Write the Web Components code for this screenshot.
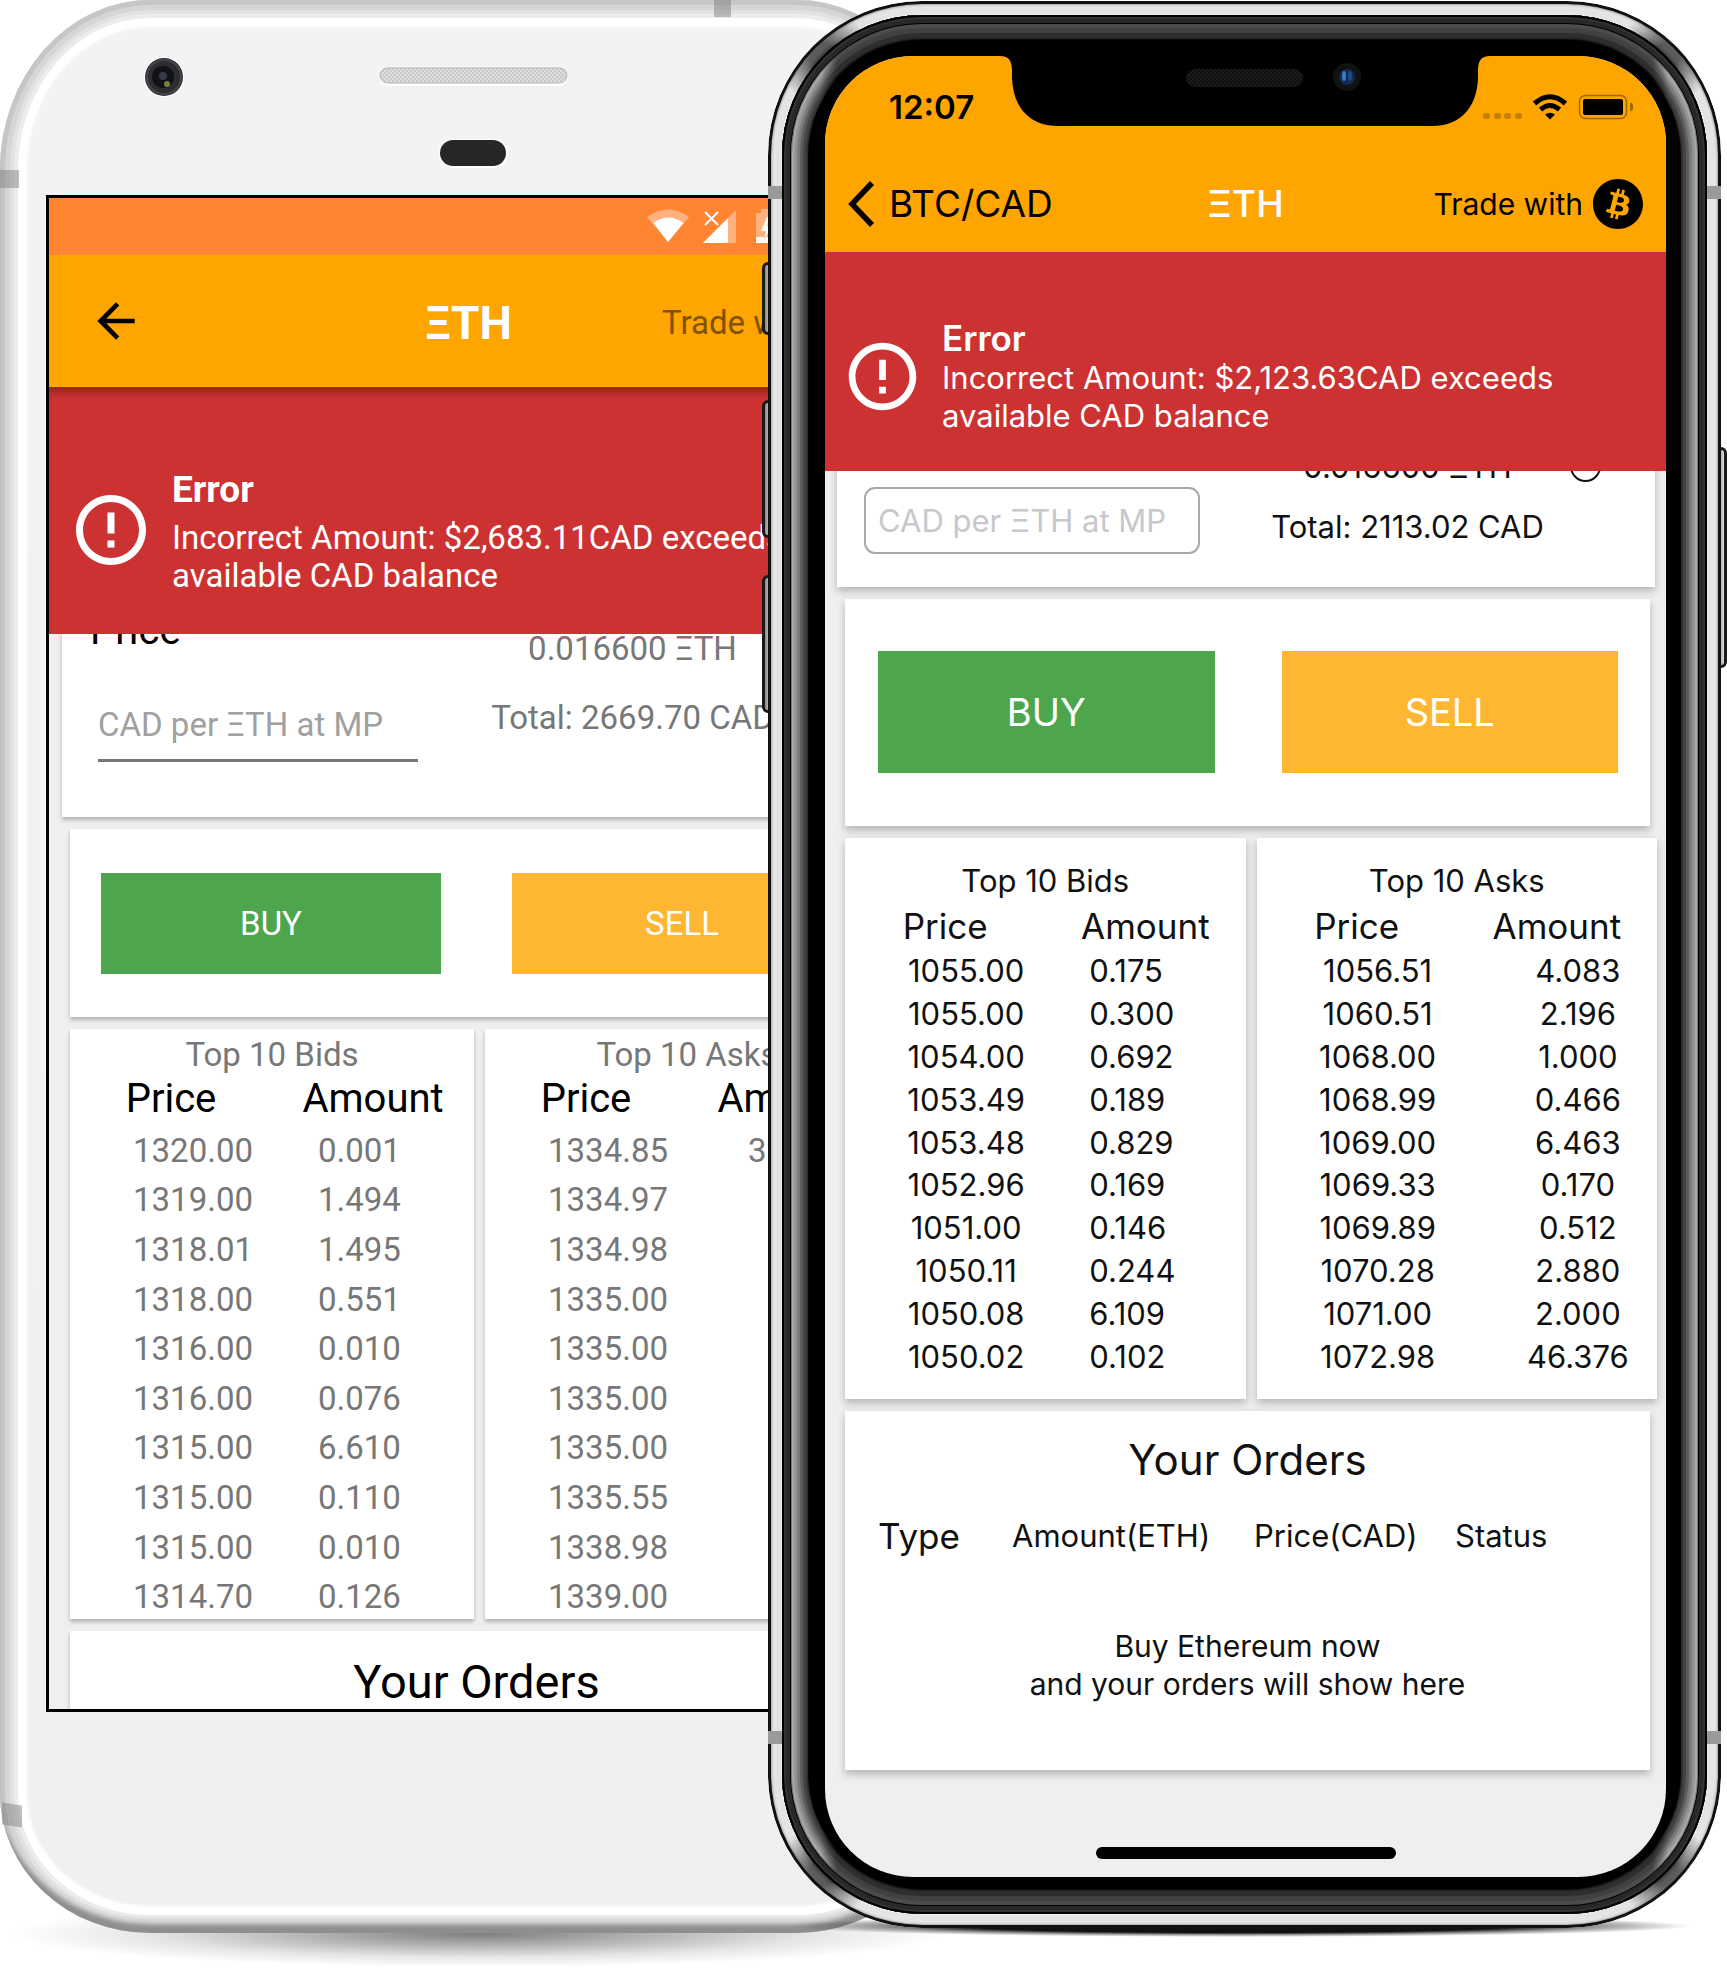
<!DOCTYPE html>
<html lang="en">
<head>
<meta charset="utf-8">
<title>ETH trading on Android and iOS</title>
<style>
  body { margin: 0; background: #fff; }
</style>
</head>
<body>
<device-stage>
  <android-device slot="back">
    <android-status></android-status>
    <android-toolbar></android-toolbar>
    <error-banner heading="Error">Incorrect Amount: $2,683.11CAD exceeds<br>available CAD balance</error-banner>
    <price-form variant="android" amount="0.016600 ΞTH" total="Total: 2669.70 CAD"></price-form>
    <trade-actions></trade-actions>
    <book-pair>
      <order-book heading="Top 10 Bids" rows="1320.00 0.001,1319.00 1.494,1318.01 1.495,1318.00 0.551,1316.00 0.010,1316.00 0.076,1315.00 6.610,1315.00 0.110,1315.00 0.010,1314.70 0.126"></order-book>
      <order-book side="asks" heading="Top 10 Asks" rows="1334.85 3,1334.97,1334.98,1335.00,1335.00,1335.00,1335.00,1335.55,1338.98,1339.00"></order-book>
    </book-pair>
    <orders-card></orders-card>
  </android-device>
  <iphone-device slot="front">
    <ios-header></ios-header>
    <error-banner heading="Error">Incorrect Amount: $2,123.63CAD exceeds<br>available CAD balance</error-banner>
    <price-form variant="ios" amount="0.016600 ΞTH" total="Total: 2113.02 CAD"></price-form>
    <trade-actions></trade-actions>
    <book-pair>
      <order-book heading="Top 10 Bids" rows="1055.00 0.175,1055.00 0.300,1054.00 0.692,1053.49 0.189,1053.48 0.829,1052.96 0.169,1051.00 0.146,1050.11 0.244,1050.08 6.109,1050.02 0.102"></order-book>
      <order-book side="asks" heading="Top 10 Asks" rows="1056.51 4.083,1060.51 2.196,1068.00 1.000,1068.99 0.466,1069.00 6.463,1069.33 0.170,1069.89 0.512,1070.28 2.880,1071.00 2.000,1072.98 46.376"></order-book>
    </book-pair>
    <orders-card detailed></orders-card>
  </iphone-device>
</device-stage>

<script>
const define = (name, template) => customElements.define(name, class extends HTMLElement {
  connectedCallback() {
    if (this.shadowRoot) return;
    this.attachShadow({ mode: 'open' }).innerHTML =
      '<style>*,*::before,*::after,:host{box-sizing:border-box}:host{display:block}</style>' + template(this);
  }
});

/* Two phones share one grid; the front one overlaps the middle track. */
define('device-stage', () => `
  <style>
    :host { display: grid; grid-template-columns: 768fr 179fr 774fr 6fr; align-items: start; padding-bottom: 41px; overflow: hidden; }
    slot { display: block; grid-row: 1; min-width: 0; }
    [name=back] { grid-column: 1 / 3; }
    [name=front] { grid-column: 2 / 4; z-index: 1; padding-top: 1px; }
  </style>
  <slot name="back"></slot><slot name="front"></slot>`);

define('android-device', () => `
  <style>
    :host {
      position: relative;
      font-family: Roboto, "Liberation Sans", sans-serif;
      --text: #777; --strong: #000; --size: 33px; --head-size: 40px;
      --banner-pad: 77px 0 39px 20px; --banner-gap: 19px; --icon: 84px;
      --error-size: 37px; --error-line: 51px; --error-gap: 4px; --error-weight: 700; --message-size: 33px;
      --banner-shade: inset 0 10px 10px -6px rgba(0,0,0,.35);
      --card-margin: 12px 15px 0 21px; --pair-margin: 12px 9px 0 21px; --card-shade: 0 3px 4px rgba(0,0,0,.25);
      --actions-pad: 44px 31px 43px; --actions-gap: 71px; --button-height: 101px; --button-size: 33px;
      --book-pad: 6px 0 0; --title-line: 40px; --th-height: 48px; --td-height: 49px; --table-height: 544px; --td-top: 6px;
      --price-pad: 0 0 0 44px; --amount-pad: 0 0 0 46px; --asks-amount-pad: 0 0 0 61px; --asks-align: left;
      --orders-size: 47px; --orders-line: 54px; --orders-pad: 24px 0 0;
    }
    .body {
      position: relative; padding: 0 46px 221px; border-radius: 150px 150px 150px 150px / 170px 170px 140px 140px;
      background: linear-gradient(#f3f3f3, #f0f0f0);
      box-shadow: inset 0 -12px 5px -3px #8e8e8e, inset 0 -18px 3px -3px #dedede,
        inset 0 0 0 5px #c6c6c6, inset 0 0 0 10px #d6d6d6, inset 0 0 0 14px #e2e2e2,
        inset 0 0 0 18px #ececec, inset 0 0 3px 27px #fff;
    }
    .ground { position: absolute; left: 10px; right: 0; bottom: -34px; height: 66px; border-radius: 50%;
      background: radial-gradient(closest-side, rgba(0,0,0,.5), rgba(0,0,0,.1) 70%, transparent); }
    .top { display: block; width: 100%; height: 195px; }
    .screen { border: 3px solid #000; background: #efefef; overflow: hidden; }
    .band { position: absolute; background: rgba(120,120,120,.45); }
    .left-top { left: 0; top: 170px; width: 19px; height: 18px; }
    .left-bottom { left: 2px; top: 1804px; width: 20px; height: 22px; transform: skewY(8deg); }
    .top-right { right: 216px; top: 0; width: 17px; height: 17px; }
  </style>
  <div class="ground"></div>
  <div class="body">
    <svg class="top" viewBox="46 0 855 195" aria-hidden="true">
      <defs><pattern id="mesh" width="4" height="4" patternUnits="userSpaceOnUse"><rect width="4" height="4" fill="#dedede"/><circle cx="1" cy="1" r="1" fill="#c2c2c2"/><circle cx="3" cy="3" r="1" fill="#c2c2c2"/></pattern></defs>
      <circle cx="164" cy="77" r="20" fill="#fff"/><circle cx="164" cy="77" r="19" fill="#2c2d31"/><circle cx="164" cy="77" r="17" fill="none" stroke="#44464b" stroke-width="2"/>
      <circle cx="163" cy="77" r="11" fill="#111215"/><circle cx="163" cy="76" r="4" fill="#363a48"/><circle cx="167" cy="84" r="3" fill="#75823a"/>
      <rect x="379" y="68" width="189" height="18" rx="9" fill="#fff"/><rect x="380" y="68" width="187" height="15" rx="7.500" fill="url(#mesh)" stroke="#b4b4b4"/>
      <rect x="439" y="139" width="69" height="29" rx="14" fill="#fff"/><rect x="440" y="140" width="66" height="26" rx="13" fill="#272727"/>
    </svg>
    <div class="screen"><slot></slot></div>
  </div>
  <span class="band left-top"></span><span class="band left-bottom"></span><span class="band top-right"></span>`);

define('android-status', () => `
  <style>
    :host { display: flex; justify-content: flex-end; background: #ff8533; height: 57px; padding: 9px 111px 0 0; }
    svg { display: block; width: 140px; height: 40px; }
  </style>
  <svg viewBox="647 207 140 40" role="img" aria-label="Wi-Fi, no signal, charging">
    <path d="M647 217Q668 202 689 217L668 242z" fill="#ffb280"/><path d="M653.500 223Q668 212 683.500 223L668 242z" fill="#fff"/>
    <path d="M703 243 736 210V243z" fill="#ffb280"/><path d="M703 243 728 218V243z" fill="#fff"/><path d="M705 212l13 13m0-13l-13 13" stroke="#fff" stroke-width="2"/>
    <path d="M756 213h5v-4h12v4h5v30h-22z" fill="#ffb280"/><path d="M756 237h22v6h-22zM767 217l-6 14h5l-2 9 8-14h-5l2-9z" fill="#fff"/>
  </svg>`);

define('android-toolbar', () => `
  <style>
    header { display: grid; grid-template-columns: 1fr auto 1fr; gap: 150px; align-items: center; height: 132px; padding: 0 49px 0 39px; background: #ffa500; }
    button { justify-self: start; border: 0; padding: 0; background: none; width: 56px; height: 56px; }
    svg { display: block; width: 56px; height: 56px; }
    h1, p { margin: 0; padding-top: 4px; white-space: nowrap; }
    h1 { font-size: 46px; line-height: 54px; color: #fff; }
    p { font-size: 33px; line-height: 40px; color: #7f5200; }
  </style>
  <header>
    <button aria-label="Back"><svg viewBox="0 0 24 24"><path d="M20 11H7.830l5.590-5.590L12 4l-8 8 8 8 1.410-1.410L7.830 13H20v-2z"/></svg></button>
    <h1>ΞTH</h1><p>Trade with</p>
  </header>`);

define('iphone-device', () => `
  <style>
    :host {
      position: relative;
      font-family: Inter, "Liberation Sans", sans-serif;
      --text: #111; --strong: #111; --size: 31px; --head-size: 35px;
      --banner-pad: 66px 0 36px 17px; --banner-gap: 19px; --icon: 81px;
      --error-size: 35px; --error-line: 40px; --error-gap: 1px; --error-weight: 600; --message-size: 31px; --banner-shade: none;
      --card-margin: 12px 16px 0 20px; --pair-margin: 12px 9px 0 20px; --card-shade: 0 4px 8px rgba(0,0,0,.25);
      --actions-pad: 52px 32px 53px 33px; --actions-gap: 67px; --button-height: 122px; --button-size: 38px;
      --book-pad: 21px 0 22px; --title-line: 43px; --th-height: 47px; --td-height: 42px; --table-height: 475px; --td-top: 2px;
      --price-pad: 0 0 0 42px; --amount-pad: 0 0 0 44px; --asks-amount-pad: 0 0 0 42px; --asks-align: center;
      --orders-size: 42px; --orders-line: 52px; --orders-pad: 23px 0 67px;
    }
    .key { position: absolute; left: -6px; width: 12px; border: 3px solid #1a1a1a; border-radius: 6px; background: linear-gradient(90deg, #888, #ddd); }
    .mute { top: 261px; height: 73px; } .up { top: 399px; height: 138px; } .down { top: 574px; height: 138px; }
    .power { left: auto; right: -6px; top: 446px; height: 221px; }
    .ground { position: absolute; left: 2%; right: 3%; bottom: -9px; height: 22px; border-radius: 50%;
      background: radial-gradient(closest-side, #111 60%, rgba(60,60,60,.5) 80%, transparent); }
    .shell {
      position: relative; padding: 55px 55px 51px 57px; border-radius: 154px;
      background:
        radial-gradient(circle at 54px 54px, #333 12px, transparent 48px),
        radial-gradient(circle at calc(100% - 54px) 54px, #333 12px, transparent 48px),
        radial-gradient(circle at 54px calc(100% - 54px), #333 12px, transparent 48px),
        radial-gradient(circle at calc(100% - 54px) calc(100% - 54px), #333 12px, transparent 48px), #fff;
      box-shadow: inset 0 0 0 3px #111, inset 0 0 2px 4px rgba(110,110,110,.5), inset 0 0 3px 11px rgba(255,255,255,.1), inset 0 0 3px 14px rgba(140,140,140,.25);
    }
    .rim, .glow { position: absolute; inset: 14px; border-radius: 140px; }
    .rim { background: #000; box-shadow: inset 0 0 0 2px #000, inset 0 0 0 4px #333, inset 0 0 0 8px #282828, inset 0 0 0 9px #000,
      inset 0 0 1px 13px #4c4c4c, inset 0 0 1px 18px #414141, inset 0 0 2px 24px #2e2e2e; }
    .glow { inset: 23px; border-radius: 131px; box-shadow: inset 0 0 0 1px #777, inset 0 0 1px 3px #aaa, inset 0 0 1px 6px #949494, inset 0 0 1px 9px #7a7a7a, inset 0 0 1px 12px #5c5c5c, inset 0 0 1px 15px #444, inset 0 0 1px 17px #333;
      -webkit-mask: linear-gradient(90deg, #000 30px, transparent 46px calc(100% - 46px), #000 calc(100% - 30px)); mask: linear-gradient(90deg, #000 30px, transparent 46px calc(100% - 46px), #000 calc(100% - 30px)); }
    .antenna { position: absolute; width: 14px; height: 13px; background: #9a9a9a; }
    .a { left: 0; top: 185px; } .b { right: 0; top: 185px; } .c { left: 0; bottom: 184px; } .d { right: 0; bottom: 184px; }
    .screen { position: relative; border-radius: 88px; background: #efefef; overflow: hidden; }
    .notch { position: absolute; top: 0; left: calc(50% - 246px); width: 490px; height: 71px; }
    .home { width: 300px; height: 12px; border-radius: 6px; background: #000; margin: 77px auto 18px; }
  </style>
  <div class="ground"></div>
  <span class="key mute"></span><span class="key up"></span><span class="key down"></span><span class="key power"></span>
  <div class="shell">
    <div class="rim"></div><div class="glow"></div>
    <span class="antenna a"></span><span class="antenna b"></span><span class="antenna c"></span><span class="antenna d"></span>
    <div class="screen">
      <slot></slot>
      <div class="home"></div>
      <svg class="notch" viewBox="0 0 490 71" aria-hidden="true">
        <defs><pattern id="grid" width="4" height="4" patternUnits="userSpaceOnUse"><rect width="4" height="4" fill="#1c1c1c"/><circle cx="1" cy="1" r="1" fill="#0a0a0a"/><circle cx="3" cy="3" r="1" fill="#0a0a0a"/></pattern></defs>
        <path d="M0 0C9 0 12 5 12 15V22C13 52 30 70 58 70H432C460 70 477 52 478 22V15C478 5 481 0 490 0z"/>
        <rect x="186" y="13" width="117" height="18" rx="9" fill="url(#grid)"/>
        <circle cx="347" cy="21" r="14" fill="#111"/><circle cx="347" cy="21" r="8" fill="#0e2a55"/><ellipse cx="344" cy="20" rx="2" ry="5" fill="#3c7cc4"/><ellipse cx="350" cy="20" rx="2" ry="5" fill="#1c4a82"/>
      </svg>
    </div>
  </div>`);

define('ios-header', () => `
  <style>
    header { background: #ffa500; color: #000; }
    .status { display: flex; align-items: center; justify-content: space-between; height: 102px; padding: 0 33px 0 64px; }
    .status span { font-size: 33px; line-height: 40px; font-weight: 600; }
    .status svg { display: block; width: 150px; height: 28px; }
    nav { display: grid; grid-template-columns: 1fr auto 1fr; align-items: center; height: 94px; padding: 0 23px 2px; }
    a { display: flex; align-items: center; gap: 14px; color: inherit; text-decoration: none; font-size: 37px; line-height: 46px; }
    a svg { width: 27px; height: 46px; }
    h1 { margin: 0; font-size: 37px; line-height: 46px; font-weight: 500; color: #fff; }
    .trade { justify-self: end; display: flex; align-items: center; gap: 10px; font-size: 30px; line-height: 40px; white-space: nowrap; }
    .trade svg { width: 50px; height: 50px; }
  </style>
  <header>
    <div class="status"><span>12:07</span>
      <svg viewBox="1483 93 150 28" role="img" aria-label="Wi-Fi, battery full">
        <g fill="#c98200"><rect x="1483" y="113" width="7" height="6" rx="2"/><rect x="1494" y="113" width="7" height="6" rx="2"/><rect x="1504" y="113" width="7" height="6" rx="2"/><rect x="1515" y="113" width="7" height="6" rx="2"/></g>
        <g fill="none" stroke="#000" stroke-width="5"><path d="M1534.500 103.500Q1550 90 1565.500 103.500"/><path d="M1540.500 109.500Q1550 101.500 1559.500 109.500"/></g>
        <path d="M1545 114.500Q1550 111 1555 114.500L1550 119.500z"/>
        <rect x="1579.500" y="95.500" width="47" height="23" rx="6" fill="none" stroke="#a06800" stroke-width="1.500"/>
        <rect x="1583" y="99" width="40" height="16" rx="2"/><path d="M1630 102.500q3.500 1 3.500 4.500t-3.500 4.500z" fill="#a06800"/>
      </svg>
    </div>
    <nav>
      <a href="#"><svg viewBox="0 0 27 46" aria-hidden="true"><path d="M24 2 4 23 24 44" fill="none" stroke="#000" stroke-width="5.500"/></svg>BTC/CAD</a>
      <h1>ΞTH</h1>
      <div class="trade">Trade with
        <svg viewBox="0 0 32 32" role="img" aria-label="Bitcoin"><path fill-rule="evenodd" d="M16 32C7.163 32 0 24.837 0 16S7.163 0 16 0s16 7.163 16 16-7.163 16-16 16zm7.189-17.980c.314-2.096-1.283-3.223-3.465-3.975l.708-2.840-1.728-.430-.690 2.765c-.454-.114-.920-.220-1.385-.326l.695-2.783L15.596 6l-.708 2.839c-.376-.086-.746-.170-1.104-.260l.002-.009-2.384-.595-.460 1.846s1.283.294 1.256.312c.700.175.826.638.805 1.006l-.806 3.235c.048.012.110.030.180.057l-.183-.045-1.130 4.532c-.086.212-.303.531-.793.410.018.025-1.256-.313-1.256-.313l-.858 1.978 2.250.561c.418.105.828.215 1.231.318l-.715 2.872 1.727.430.708-2.840c.472.127.930.245 1.378.357l-.706 2.828 1.728.430.715-2.866c2.948.558 5.164.333 6.097-2.333.752-2.146-.037-3.385-1.588-4.192 1.130-.260 1.980-1.003 2.207-2.538zm-3.950 5.538c-.533 2.147-4.148.986-5.320.695l.950-3.805c1.172.293 4.929.872 4.370 3.110zm.535-5.569c-.487 1.953-3.495.960-4.470.717l.860-3.450c.975.243 4.118.696 3.610 2.733z"/></svg>
      </div>
    </nav>
  </header>`);

define('error-banner', el => `
  <style>
    :host { position: relative; z-index: 1; }
    section { display: flex; align-items: center; gap: var(--banner-gap); padding: var(--banner-pad); background: #cc3232; color: #fff; box-shadow: var(--banner-shade); }
    svg { flex: none; width: var(--icon); height: var(--icon); fill: #fff; }
    h2 { margin: 0 0 var(--error-gap); font-size: var(--error-size); line-height: var(--error-line); font-weight: var(--error-weight); }
    p { margin: 0; font-size: var(--message-size); line-height: 38px; white-space: nowrap; }
  </style>
  <section role="alert">
    <svg viewBox="0 0 24 24" aria-hidden="true"><path d="M11 15h2v2h-2zm0-8h2v6h-2zm.990-5C6.470 2 2 6.480 2 12s4.470 10 9.990 10C17.520 22 22 17.520 22 12S17.520 2 11.990 2zM12 20c-4.420 0-8-3.580-8-8s3.580-8 8-8 8 3.580 8 8-3.580 8-8 8z"/></svg>
    <div><h2>${el.getAttribute('heading')}</h2><p><slot></slot></p></div>
  </section>`);

define('ui-card', () => `
  <style>:host { background: #fff; box-shadow: var(--card-shade); }</style><slot></slot>`);

/* The top of this form is scrolled under the error banner. */
define('price-form', el => {
  const ios = el.getAttribute('variant') === 'ios';
  return `
  <style>
    ui-card { display: grid; align-items: start; font-size: var(--size); line-height: 39px; color: var(--text); }
    label { display: block; color: #000; }
    input { display: block; width: 100%; font: inherit; color: inherit; outline: 0; background: #fff; border-radius: 0; }
    p { margin: 0; white-space: nowrap; text-align: center; }
    .android { margin: -34px 7px 0 13px; padding: 7px 0 55px 28px; grid-template-columns: 328px 429px; }
    .android label { font-size: 40px; line-height: 47px; margin-bottom: 36px; }
    .android .field { padding-left: 8px; }
    .android input { height: 72px; padding: 0; border: 0; border-bottom: 3px solid #777; }
    .android input::placeholder { color: #a0a0a0; opacity: 1; }
    .android .totals { padding-top: 22px; display: grid; gap: 30px; }
    .android .info { display: none; }
    .ios { margin: -27px 11px 0 12px; padding: 3px 40px 33px 27px; grid-template-columns: 336fr 415fr; align-items: end; }
    .ios input { height: 67px; padding: 0 12px; border: 2px solid #a8a8ac; border-radius: 11px; }
    .ios input::placeholder { color: #c7c7cc; opacity: 1; }
    .ios .totals { display: grid; gap: 21px; padding-bottom: 8px; }
    .line { display: grid; grid-template-columns: 1fr auto 1fr; align-items: center; }
    .line p { grid-column: 2; }
    .info { justify-self: end; margin-right: 14px; width: 31px; height: 31px; border: 2px solid #111; border-radius: 50%; }
  </style>
  <ui-card class="${ios ? 'ios' : 'android'}">
    <div>${ios ? '' : '<label for="price">Price</label>'}
      <div class="field"><input id="price" type="text" placeholder="CAD per ΞTH at MP"${ios ? ' aria-label="Price"' : ''}></div></div>
    <div class="totals"><div class="line"><p>${el.getAttribute('amount')}</p><span class="info"></span></div><p>${el.getAttribute('total')}</p></div>
  </ui-card>`;
});

define('trade-actions', () => `
  <style>
    ui-card { display: grid; grid-template-columns: 1fr 1fr; gap: var(--actions-gap); margin: var(--card-margin); padding: var(--actions-pad); }
    button { border: 0; padding: 0; height: var(--button-height); font-family: inherit; font-size: var(--button-size); font-weight: 400; color: #fff; }
    .buy { background: #4da64d; } .sell { background: #ffb733; }
  </style>
  <ui-card><button class="buy">BUY</button><button class="sell">SELL</button></ui-card>`);

define('book-pair', () => `
  <style>:host { display: grid; grid-template-columns: 1fr 1fr; gap: 11px; margin: var(--pair-margin); }</style><slot></slot>`);

define('order-book', el => `
  <style>
    ui-card { padding: var(--book-pad); font-size: var(--size); color: var(--text); }
    table { width: 100%; height: var(--table-height); table-layout: fixed; border-collapse: collapse; }
    caption { line-height: var(--title-line); }
    th, td { padding: 0; text-align: center; line-height: 40px; white-space: nowrap; }
    th { height: var(--th-height); font-size: var(--head-size); font-weight: 400; color: var(--strong); }
    td { height: var(--td-height); padding: var(--price-pad); }
    tbody td { padding-top: var(--td-top); }
    td:nth-child(2) { text-align: left; padding: var(--amount-pad); padding-top: var(--td-top); }
    .asks td:nth-child(2) { text-align: var(--asks-align); padding: var(--asks-amount-pad); padding-top: var(--td-top); }
  </style>
  <ui-card><table class="${el.getAttribute('side') || 'bids'}">
    <caption>${el.getAttribute('heading')}</caption>
    <thead><tr><th scope="col">Price</th><th scope="col">Amount</th></tr></thead>
    <tbody>${el.getAttribute('rows').split(',').map(r => { const [p, a = ''] = r.split(' '); return `<tr><td>${p}</td><td>${a}</td></tr>`; }).join('')}</tbody>
  </table></ui-card>`);

define('orders-card', el => `
  <style>
    ui-card { margin: var(--card-margin); padding: var(--orders-pad); color: var(--strong); }
    h2 { margin: 0; text-align: center; font-size: var(--orders-size); line-height: var(--orders-line); font-weight: 400; }
    table { width: 100%; table-layout: fixed; border-collapse: collapse; margin-top: 28px; }
    th { padding: 0; height: 44px; text-align: left; font-size: 31px; font-weight: 400; line-height: 44px; white-space: nowrap; }
    th:first-child { width: 167px; padding-left: 33px; font-size: 35px; }
    th:nth-child(2) { width: 242px; } th:nth-child(3) { width: 201px; }
    td { padding: 69px 0 0; text-align: center; font-size: 30px; line-height: 38px; }
  </style>
  <ui-card><h2>Your Orders</h2>${el.hasAttribute('detailed') ? `
    <table>
      <thead><tr><th scope="col">Type</th><th scope="col">Amount(ETH)</th><th scope="col">Price(CAD)</th><th scope="col">Status</th></tr></thead>
      <tbody><tr><td colspan="4">Buy Ethereum now<br>and your orders will show here</td></tr></tbody>
    </table>` : ''}</ui-card>`);
</script>
</body>
</html>
